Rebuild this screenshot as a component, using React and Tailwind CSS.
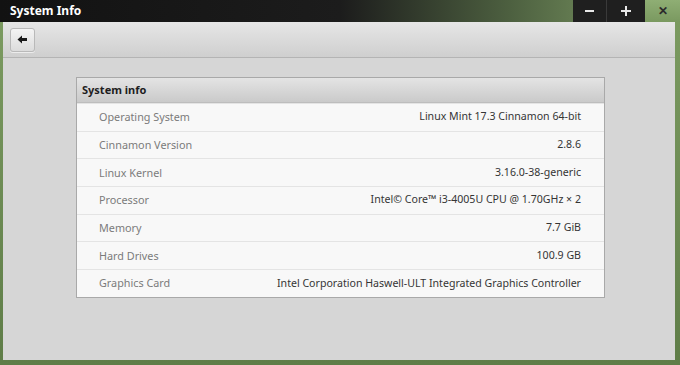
import React from 'react'

const rows = [
  ['Operating System', 'Linux Mint 17.3 Cinnamon 64-bit'],
  ['Cinnamon Version', '2.8.6'],
  ['Linux Kernel', '3.16.0-38-generic'],
  ['Processor', 'Intel© Core™ i3-4005U CPU @ 1.70GHz × 2'],
  ['Memory', '7.7 GiB'],
  ['Hard Drives', '100.9 GB'],
  ['Graphics Card', 'Intel Corporation Haswell-ULT Integrated Graphics Controller'],
]

function InfoRow({ label, value }) {
  return (
    <div className="flex items-center justify-between h-[27.7px] pl-[22px] pr-[23px] border-t border-[#e4e4e4] first:border-t-0">
      <span className="text-[#7b7b7b] text-[10.8px]">{label}</span>
      <span className="text-[#353535] text-[10.6px]">{value}</span>
    </div>
  )
}

export default function App() {
  return (
    <div
      className="w-[680px] h-[365px] flex flex-col bg-gradient-to-b from-[#7d9c62] to-[#5f7d48] px-[3px] pb-[5px] pr-[5px] text-[11px] overflow-hidden"
      style={{ fontFamily: '"Noto Sans", "Open Sans", sans-serif' }}
    >
      {/* title bar */}
      <div className="h-[22px] flex items-stretch -mx-[3px] -mr-[5px] bg-[linear-gradient(90deg,#121212_0%,#1c1c1c_50%,#4d6040_75%,#86a56b_100%)]">
        <div className="flex-1 flex items-center pl-[10px] text-white font-bold text-[12px] rounded-tl-[4px]">
          System Info
        </div>
        <div className="w-[34px] bg-[#1f1f1f] flex items-center justify-center border-r border-[#3a3a3a]">
          <div className="w-[9px] h-[2.5px] bg-[#e8e8e8]" />
        </div>
        <div className="w-[38px] bg-[#1f1f1f] flex items-center justify-center relative">
          <div className="w-[10px] h-[2.5px] bg-[#e8e8e8]" />
          <div className="absolute w-[2.5px] h-[10px] bg-[#e8e8e8]" />
        </div>
        <div className="w-[35px] flex items-center justify-center bg-gradient-to-b from-[#8fae74] to-[#7a9960]">
          <span className="text-[#2b2b2b] font-bold text-[12px] leading-none">✕</span>
        </div>
      </div>

      {/* body */}
      <div className="flex-1 flex flex-col bg-[#d6d6d6]">
        <div className="h-[36px] flex items-center pl-[7px] bg-gradient-to-b from-[#e6e6e6] to-[#cfcfcf] border-b border-[#b4b4b4]">
          <button className="w-[25px] h-[24px] rounded-[3px] border border-[#b9b9b9] bg-gradient-to-b from-[#f4f4f4] to-[#dcdcdc] flex items-center justify-center shadow-[0_1px_0_#ececec]">
            <svg width="11" height="9" viewBox="0 0 11 9">
              <path d="M0.5 4.5 L5 0.5 L5 3 L10 3 L10 6 L5 6 L5 8.5 Z" fill="#1a1a1a" />
            </svg>
          </button>
        </div>

        <div className="flex-1 pt-[19px] pl-[73px]">
          <div className="w-[529px] border border-[#a9a9a9] bg-[#f8f8f8]">
            <div className="h-[25px] flex items-center pl-[5px] bg-gradient-to-b from-[#e4e4e4] to-[#cacaca] border-b border-[#bdbdbd] font-bold text-[#1e1e1e]">
              System info
            </div>
            {rows.map(([label, value]) => (
              <InfoRow key={label} label={label} value={value} />
            ))}
          </div>
        </div>
      </div>
    </div>
  )
}
